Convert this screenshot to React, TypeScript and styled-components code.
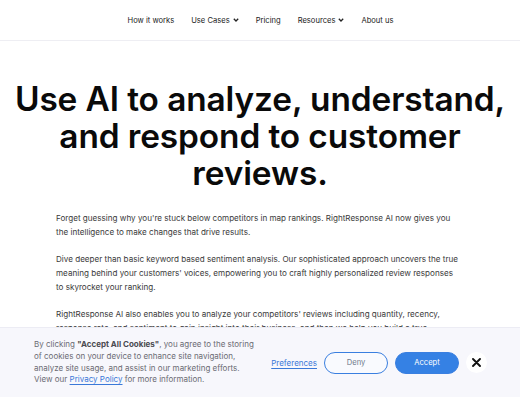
import React from "react"
import styled, { createGlobalStyle } from "styled-components"

const GlobalStyle = createGlobalStyle`
  html, body {
    margin: 0;
    padding: 0;
    background: #ffffff;
    overflow: hidden;
  }
  body {
    font-family: Inter, "Noto Sans", sans-serif;
    color: #111;
  }
`

const navItems = [
  { label: "How it works", caret: false },
  { label: "Use Cases", caret: true },
  { label: "Pricing", caret: false },
  { label: "Resources", caret: true },
  { label: "About us", caret: false },
]

// each paragraph as the lines the reference breaks it into
const paragraphs = [
  [
    "Forget guessing why you're stuck below competitors in map rankings. RightResponse AI now gives you",
    "the intelligence to make changes that drive results.",
  ],
  [
    "Dive deeper than basic keyword based sentiment analysis. Our sophisticated approach uncovers the true",
    "meaning behind your customers' voices, empowering you to craft highly personalized review responses",
    "to skyrocket your ranking.",
  ],
  [
    "RightResponse AI also enables you to analyze your competitors' reviews including quantity, recency,",
    "response rate, and sentiment to gain insight into their business, and then we help you build a true",
    "competitive advantage.",
  ],
]

const Caret = () => (
  <svg width="6" height="4" viewBox="0 0 6 4" fill="none">
    <path d="M0.8 0.8L3 3l2.2-2.2" stroke="#222" strokeWidth="1.3" />
  </svg>
)

const CloseIcon = () => (
  <svg width="9" height="9" viewBox="0 0 9 9">
    <path d="M1 1l7 7M8 1L1 8" stroke="#111" strokeWidth="1.9" strokeLinecap="round" />
  </svg>
)

const App = () => {
  return (
    <Page>
      <GlobalStyle />
      <Header>
        <Nav>
          {navItems.map(item => (
            <NavItem key={item.label}>
              {item.label}
              {item.caret && <Caret />}
            </NavItem>
          ))}
        </Nav>
      </Header>
      <Hero>
        <Title>Use AI to analyze, understand, and respond to customer reviews.</Title>
        <Body>
          {paragraphs.map((lines, i) => (
            <p key={i}>
              {lines.map((line, j) => (
                <React.Fragment key={j}>
                  {line}
                  {j < lines.length - 1 && <br />}
                </React.Fragment>
              ))}
            </p>
          ))}
        </Body>
      </Hero>
      <Banner>
        <BannerText>
          By clicking <strong>"Accept All Cookies"</strong>, you agree to the storing of cookies on your device to
          enhance site navigation, analyze site usage, and assist in our marketing efforts. View our{" "}
          <a href="#">Privacy Policy</a> for more information.
        </BannerText>
        <Actions>
          <PrefLink href="#">Preferences</PrefLink>
          <PillButton>Deny</PillButton>
          <PillButton primary>Accept</PillButton>
          <CloseButton aria-label="Close">
            <CloseIcon />
          </CloseButton>
        </Actions>
      </Banner>
    </Page>
  )
}

const Page = styled.div`
  position: relative;
  width: 520px;
  height: 397px;
  overflow: hidden;
`

const Header = styled.header`
  height: 40px;
  border-bottom: 1px solid #eeeef3;
  display: flex;
  justify-content: center;
  align-items: center;
`

const Nav = styled.nav`
  display: flex;
  gap: 17px;
  padding-left: 1px;
`

const NavItem = styled.span`
  display: flex;
  align-items: center;
  gap: 3px;
  font-size: 7.6px;
  color: #222;
`

const Hero = styled.main`
  padding-top: 40px;
`

const Title = styled.h1`
  margin: 0 auto;
  width: 500px;
  text-align: center;
  font-size: 33.4px;
  line-height: 37px;
  font-weight: 600;
  letter-spacing: -0.1px;
  color: #0a0a0a;
`

const Body = styled.div`
  margin: 19px 0 0 56px;
  width: 440px;
  font-size: 8.1px;
  line-height: 14px;
  color: #3a3a3a;
  white-space: nowrap;

  p {
    margin: 0 0 13px;
  }
`

const Banner = styled.section`
  position: absolute;
  left: 0;
  right: 0;
  bottom: 0;
  height: 69px;
  background: #f7f7fc;
  border-top: 1px solid #ececf4;
  display: flex;
  align-items: center;
  padding: 0 33px 0 34px;
  gap: 12px;
`

const BannerText = styled.p`
  margin: 0;
  width: 229px;
  font-size: 8px;
  line-height: 11.7px;
  color: #6b6b73;

  strong {
    font-weight: 700;
    color: #4a4a50;
  }

  a {
    color: #3a78d8;
    text-decoration: underline;
    text-underline-offset: 2px;
  }
`

const Actions = styled.div`
  display: flex;
  align-items: center;
  gap: 7px;
  margin-left: auto;
`

const PrefLink = styled.a`
  font-size: 8px;
  color: #3a78d8;
  text-decoration: underline;
  text-underline-offset: 2px;
`

const PillButton = styled.button<{ primary?: boolean }>`
  width: 64px;
  height: 22px;
  border-radius: 11px;
  font-family: Inter, sans-serif;
  font-size: 7.6px;
  cursor: pointer;
  border: 1.4px solid #3a7fe0;
  background: ${p => (p.primary ? "#3581e4" : "#f9fafe")};
  color: ${p => (p.primary ? "#ffffff" : "#6f7a8c")};
`

const CloseButton = styled.button`
  width: 21px;
  height: 21px;
  border-radius: 50%;
  border: none;
  background: #ffffff;
  display: flex;
  align-items: center;
  justify-content: center;
  padding: 0;
`

export default App
